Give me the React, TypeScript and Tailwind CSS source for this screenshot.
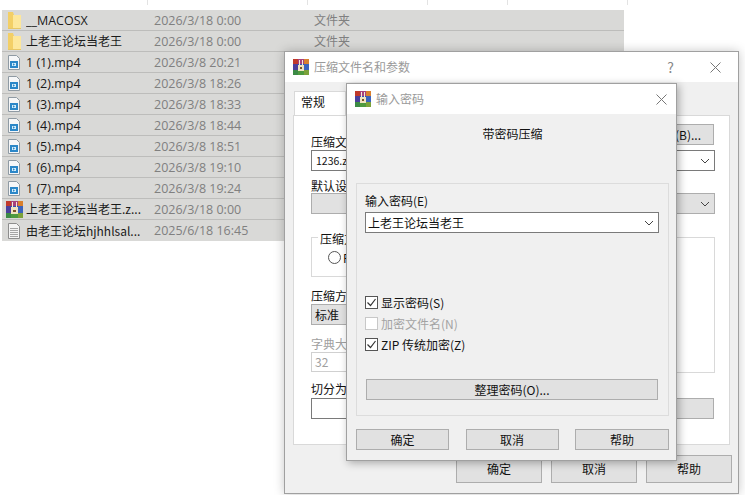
const cjk = { fontFamily: '"Noto Sans CJK SC", "Noto Sans", sans-serif' }

type FileRow = { name: string; date: string; type: string; icon: 'folder' | 'video' | 'rar' | 'text'; latin?: boolean }

const files: FileRow[] = [
  { name: '__MACOSX', date: '2026/3/18 0:00', type: '文件夹', icon: 'folder', latin: true },
  { name: '上老王论坛当老王', date: '2026/3/18 0:00', type: '文件夹', icon: 'folder' },
  { name: '1 (1).mp4', date: '2026/3/8 20:21', type: '', icon: 'video', latin: true },
  { name: '1 (2).mp4', date: '2026/3/8 18:26', type: '', icon: 'video', latin: true },
  { name: '1 (3).mp4', date: '2026/3/8 18:33', type: '', icon: 'video', latin: true },
  { name: '1 (4).mp4', date: '2026/3/8 18:44', type: '', icon: 'video', latin: true },
  { name: '1 (5).mp4', date: '2026/3/8 18:51', type: '', icon: 'video', latin: true },
  { name: '1 (6).mp4', date: '2026/3/8 19:10', type: '', icon: 'video', latin: true },
  { name: '1 (7).mp4', date: '2026/3/8 19:24', type: '', icon: 'video', latin: true },
  { name: '上老王论坛当老王.z...', date: '2026/3/18 0:00', type: '', icon: 'rar' },
  { name: '由老王论坛hjhhlsal...', date: '2025/6/18 16:45', type: '', icon: 'text' },
]

const FolderIcon = () => (
  <svg width="13" height="17" viewBox="0 0 13 17">
    <path d="M0 0h5l1 3v14H0z" fill="#f3cf66" />
    <path d="M5 3h8v14H5z" fill="#fde79b" />
    <path d="M0 16.500h13" stroke="#e8c765" />
  </svg>
)

const VideoIcon = () => (
  <svg width="12" height="15" viewBox="0 0 12 15">
    <path d="M.5.5h8l3 3v11H.5z" fill="#f6f7f8" stroke="#8f9aa3" />
    <path d="M2 6h8v7H2z" fill="#2b87c8" />
    <path d="M4 8h4v3H4z" fill="#d5edf9" />
    <path d="M5 8.300l2 1.200-2 1.200z" fill="#2b87c8" />
  </svg>
)

const TextIcon = () => (
  <svg width="12" height="16" viewBox="0 0 12 16">
    <path d="M.5.5h8l3 3v12H.5z" fill="#f4f4f4" stroke="#8d8d8d" />
    <path d="M2 5.500h8M2 7.500h8M2 9.500h8M2 11.500h8M2 13.500h8" stroke="#a5a5a5" />
  </svg>
)

const RarIcon = ({ size = 16 }: { size?: number }) => (
  <svg width={size} height={size} viewBox="0 0 16 16" shapeRendering="crispEdges">
    <rect x="0" y="0" width="5" height="5" fill="#c0392b" />
    <rect x="5" y="0" width="6" height="5" fill="#a8417c" />
    <rect x="11" y="0" width="5" height="5" fill="#d9802e" />
    <rect x="0" y="5" width="5" height="6" fill="#4a3f9c" />
    <rect x="5" y="5" width="6" height="6" fill="#2f58b5" />
    <rect x="11" y="5" width="5" height="6" fill="#3b63bd" />
    <rect x="0" y="11" width="5" height="5" fill="#3c8a45" />
    <rect x="5" y="11" width="6" height="5" fill="#4f9a3e" />
    <rect x="11" y="11" width="5" height="5" fill="#7ba23a" />
    <rect x="6" y="1" width="1" height="5" fill="#f5ecd6" />
    <rect x="9" y="1" width="1" height="5" fill="#f5ecd6" />
    <rect x="5" y="6" width="6" height="6" fill="#f0e3c0" />
    <rect x="7" y="8" width="2" height="2" fill="#7a5526" />
  </svg>
)

const icons = {
  folder: <FolderIcon />,
  video: <VideoIcon />,
  rar: <RarIcon size={17} />,
  text: <TextIcon />,
}

const Chevron = () => (
  <svg width="10" height="6" viewBox="0 0 10 6" className="shrink-0">
    <path d="M1 1l4 4 4-4" fill="none" stroke="#444" strokeWidth="1" />
  </svg>
)

const CloseX = ({ color = '#666' }: { color?: string }) => (
  <svg width="11" height="11" viewBox="0 0 11 11">
    <path d="M.5.5l10 10M10.500.5l-10 10" stroke={color} strokeWidth="1" />
  </svg>
)

const WinButton = ({ label, className }: { label: string; className: string }) => (
  <div className={`flex items-center justify-center border border-[#adadad] bg-[#e1e1e1] text-[12px] text-[#111] ${className}`}>
    {label}
  </div>
)

const CheckRow = ({ label, checked, disabled }: { label: string; checked?: boolean; disabled?: boolean }) => (
  <div className={`flex h-[13px] items-center gap-[3px] text-[12px] ${disabled ? 'text-[#a3a3a3]' : 'text-[#111]'}`}>
    <div className={`flex h-[13px] w-[13px] items-center justify-center border bg-white ${disabled ? 'border-[#c8c8c8]' : 'border-[#555]'}`}>
      {checked && (
        <svg width="11" height="11" viewBox="0 0 11 11">
          <path d="M1.500 5.500l3 3 5-6.500" fill="none" stroke="#333" strokeWidth="1.200" />
        </svg>
      )}
    </div>
    <span className="whitespace-pre">{label}</span>
  </div>
)

const ColumnTicks = () => (
  <div className="flex h-[5px]">
    <div className="w-[148px] border-r border-[#e3e3e3]" />
    <div className="w-[160px] border-r border-[#e3e3e3]" />
    <div className="w-[120px] border-r border-[#e3e3e3]" />
    <div className="w-[80px] border-r border-[#e3e3e3]" />
    <div className="w-[120px] border-r border-[#e3e3e3]" />
  </div>
)

const FileList = () => (
  <div className="ml-[2px] mt-[5px] flex w-[622px] flex-col bg-[#d9d9d7]">
    {files.map((file, i) => (
      <div key={file.name} className={`flex h-[21px] items-center ${i < files.length - 1 ? 'border-b border-[#bdbdbb]' : ''}`}>
        <div className="flex w-[24px] shrink-0 justify-center">{icons[file.icon]}</div>
        <div className={`w-[128px] shrink-0 truncate text-[#1a1a1a] ${file.latin ? "translate-y-px font-['Open_Sans'] text-[12.500px]" : 'text-[12px]'}`}>
          {file.name}
        </div>
        <div className="w-[160px] shrink-0 translate-y-px font-['Open_Sans'] text-[12.500px] text-[#808080]">{file.date}</div>
        <div className="text-[12px] text-[#808080]">{file.type}</div>
      </div>
    ))}
  </div>
)

const CompressDialog = () => (
  <div className="absolute left-[284px] top-[51px] flex h-[443px] w-[455px] flex-col border border-[#a0a0a0] bg-[#f0f0f0] shadow-[0_0_10px_rgba(0,0,0,0.22)]">
    <div className="flex h-[30px] shrink-0 items-center bg-white pl-[8px] pr-[17px]">
      <RarIcon />
      <span className="ml-[5px] text-[12px] text-[#9a9a9a]">压缩文件名和参数</span>
      <span className="ml-auto mr-[36px] text-[14px] text-[#888]">?</span>
      <CloseX color="#777" />
    </div>
    <div className="relative flex-1 px-[8px]">
      <div className="ml-px mt-[9px] flex h-[24px] w-[52px] items-center border border-b-0 border-[#d9d9d9] bg-white pb-[3px] pl-[6px] text-[12px] text-[#111]">
        常规
      </div>
      <div className="flex h-[330px] flex-col border border-[#d9d9d9] bg-white pl-[17px] pr-[14px] text-[12px] text-[#111]">
        <div className="mt-[17px] h-[17px] leading-[17px]">压缩文</div>
        <div className="flex h-[21px] items-center justify-between border border-[#7a7a7a] px-[4px]">
          <span className="text-[10.500px]">1236.z</span>
          <Chevron />
        </div>
        <div className="mt-[7px] h-[15px] leading-[15px]">默认设</div>
        <div className="flex h-[21px] items-center justify-end border border-[#adadad] bg-[#e1e1e1] pr-[4px]">
          <Chevron />
        </div>
        <div className="relative mt-[23px] h-[40px] w-[100px] border border-[#d9d9d9]">
          <span className="absolute left-[6px] top-[-8px] bg-white px-[2px]">压缩方</span>
          <div className="absolute left-[16px] top-[13px] h-[13px] w-[13px] rounded-full border border-[#555] bg-white" />
          <span className="absolute left-[31px] top-[11px]">F</span>
        </div>
        <div className="mt-[10px] h-[17px] leading-[17px]">压缩方</div>
        <div className="flex h-[21px] w-[300px] items-center border border-[#adadad] bg-[#e1e1e1] pl-[3px]">标准</div>
        <div className="mt-[10px] h-[17px] leading-[17px] text-[#a0a0a0]">字典大</div>
        <div className="flex h-[20px] w-[300px] items-center border border-[#d0d0d0] pl-[3px] text-[#a0a0a0]">32</div>
        <div className="mt-[8px] h-[18px] leading-[18px]">切分为</div>
        <div className="h-[21px] w-[300px] border border-[#7a7a7a]" />
      </div>
      <div className="absolute right-[24px] top-[42px] flex h-[21px] w-[60px] items-center justify-end border border-[#adadad] bg-[#e1e1e1] pr-[12px] text-[12px] text-[#111]">
        (B)...
      </div>
      <div className="absolute right-[23px] top-[155px] h-[136px] w-[60px] border border-[#d9d9d9] bg-white" />
      <div className="absolute right-[24px] top-[316px] h-[21px] w-[60px] border border-[#adadad] bg-[#e1e1e1]" />
      <div className="mr-[-2px] mt-[10px] flex justify-end gap-[9px]">
        <WinButton label="确定" className="h-[28px] w-[86px]" />
        <WinButton label="取消" className="h-[28px] w-[86px]" />
        <WinButton label="帮助" className="h-[28px] w-[86px]" />
      </div>
    </div>
  </div>
)

const PasswordDialog = () => (
  <div className="absolute left-[346px] top-[83px] flex h-[378px] w-[331px] flex-col border border-[#a0a0a0] bg-[#f0f0f0] shadow-[2px_2px_8px_rgba(0,0,0,0.3)]">
    <div className="flex h-[30px] shrink-0 items-center bg-white pl-[8px] pr-[9px]">
      <RarIcon />
      <span className="ml-[5px] text-[12px] text-[#9a9a9a]">输入密码</span>
      <span className="ml-auto">
        <CloseX color="#777" />
      </span>
    </div>
    <div className="flex flex-1 flex-col pl-[9px] pr-[7px]">
      <div className="mt-[11px] text-center text-[12px] leading-[18px] text-[#111]">带密码压缩</div>
      <div className="mt-[40px] flex h-[233px] flex-col border border-[#dcdcdc] pl-[8px] pr-[9px]">
        <div className="mt-[7px] h-[21px] text-[12px] leading-[20px] text-[#111]">输入密码(E)</div>
        <div className="flex h-[21px] items-center justify-between border border-[#7a7a7a] bg-white pl-[2px] pr-[4px] text-[12px] text-[#111]">
          <span>上老王论坛当老王</span>
          <Chevron />
        </div>
        <div className="mt-[63px] flex flex-col gap-[8px]">
          <CheckRow label="显示密码(S)" checked />
          <CheckRow label="加密文件名(N)" disabled />
          <CheckRow label="ZIP 传统加密(Z)" checked />
        </div>
        <WinButton label="整理密码(O)..." className="ml-px mt-[28px] h-[21px] w-[292px]" />
      </div>
      <div className="mt-[13px] flex justify-between">
        <WinButton label="确定" className="h-[21px] w-[93px]" />
        <WinButton label="取消" className="h-[21px] w-[93px]" />
        <WinButton label="帮助" className="h-[21px] w-[94px]" />
      </div>
    </div>
  </div>
)

export default function App() {
  return (
    <div className="relative h-[495px] w-[745px] overflow-hidden bg-white" style={cjk}>
      <ColumnTicks />
      <FileList />
      <CompressDialog />
      <PasswordDialog />
    </div>
  )
}
